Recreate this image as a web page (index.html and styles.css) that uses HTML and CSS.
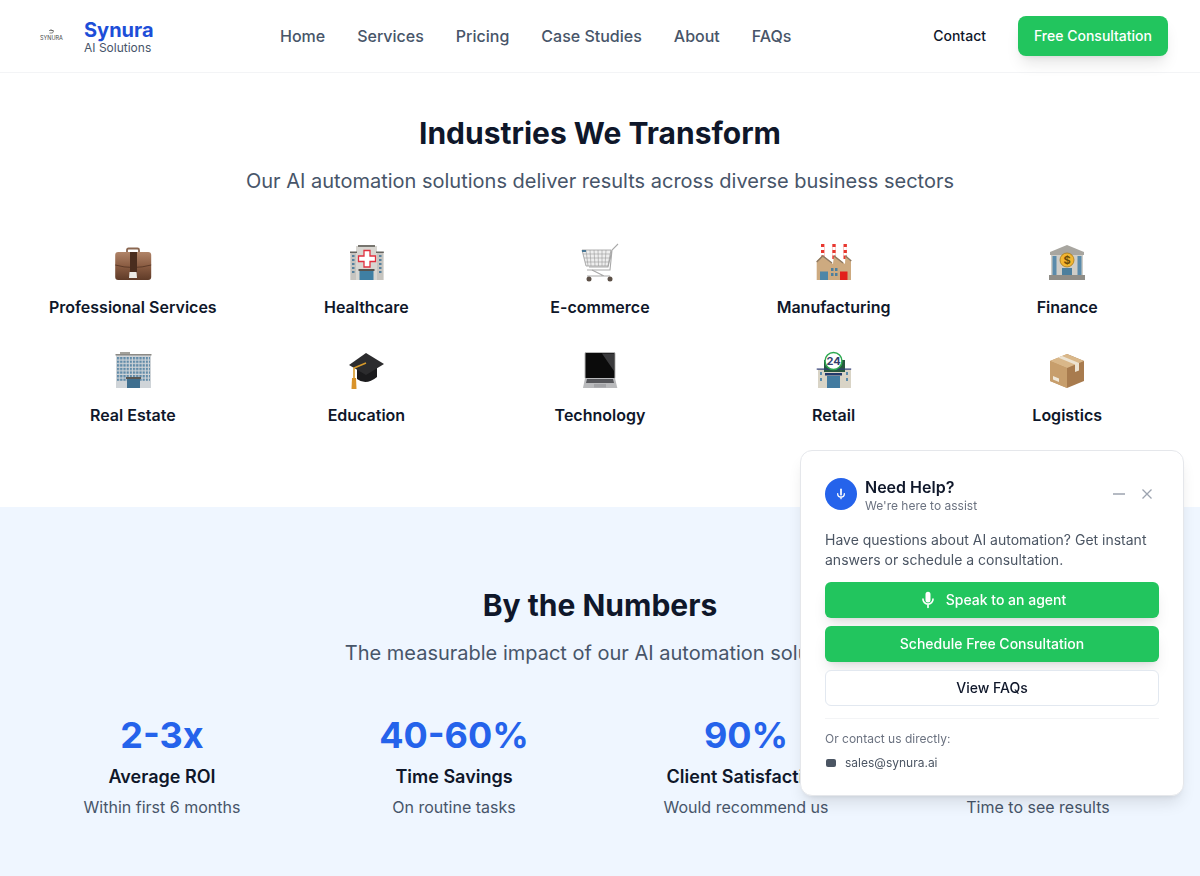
FILE: index.html
```html
<!DOCTYPE html>
<html lang="en">
<head>
	<meta charset="utf-8" />
	<title>Synura AI Solutions</title>
	<link rel="stylesheet" href="styles.css">
</head>
<body>
<header class="nav">
	<div class="brand">
		<svg class="brand-logo" viewBox="0 0 40 40" aria-hidden="true">
			<path d="M17 14.500h4.500M18.500 13.500l3 1.500-1 2h-3" stroke="#555" stroke-width=".7" fill="none"/>
			<text x="19.500" y="23.500" text-anchor="middle" class="brand-logo-text">SYNURA</text>
		</svg>
		<div>
			<div class="brand-name">Synura</div>
			<div class="brand-sub">AI Solutions</div>
		</div>
	</div>
	<nav class="nav-links">
		<a>Home</a>
		<a>Services</a>
		<a>Pricing</a>
		<a>Case Studies</a>
		<a>About</a>
		<a>FAQs</a>
	</nav>
	<div class="nav-actions">
		<a class="contact">Contact</a>
		<a class="btn-green nav-cta">Free Consultation</a>
	</div>
</header>

<section class="industries">
	<h2>Industries We Transform</h2>
	<p class="lead">Our AI automation solutions deliver results across diverse business sectors</p>
	<div class="industry-grid">
		<div class="industry">
			<svg class="industry-icon" viewBox="0 0 40 40" aria-hidden="true">
				<defs><linearGradient id="case" x1="0" y1="0" x2="0" y2="1"><stop offset="0" stop-color="#b08468"/><stop offset=".5" stop-color="#8a5c42"/><stop offset="1" stop-color="#5f3b28"/></linearGradient></defs>
				<path d="M14 10V7Q14 5.500 15.500 5.500H24.500Q26 5.500 26 7V10" fill="none" stroke="#8a6650" stroke-width="1.800"/>
				<rect x="2.200" y="9" width="36" height="28" rx="3" fill="url(#case)"/>
				<path d="M2.200 22Q20 27 38.200 22" fill="none" stroke="#4a2c1c" stroke-width=".7"/>
				<rect x="17" y="9" width="7" height="21" fill="#4a2d1e"/>
				<path d="M16.500 29H23.500L24 35H16Z" fill="#eceae6"/>
			</svg>
			<div class="industry-name">Professional Services</div>
		</div>
		<div class="industry">
			<svg class="industry-icon" viewBox="0 0 40 40" aria-hidden="true">
				<rect x="4.300" y="9" width="33.300" height="28" fill="#c6c4bf"/>
				<rect x="10" y="3" width="21" height="34" fill="#d8d6d1"/>
				<rect x="12" y="2" width="17" height="2" fill="#77756f"/>
				<rect x="4" y="8.500" width="7" height="1.500" fill="#66645f"/>
				<rect x="30" y="8.500" width="7.800" height="1.500" fill="#66645f"/>
				<path d="M18 7.500H24V13H29.500V18.500H24V24H18V18.500H12.500V13H18Z" fill="#fff" stroke="#e0303f" stroke-width="1.300"/>
				<g fill="#56819e"><rect x="6" y="12" width="2.500" height="2"/><rect x="6" y="16" width="2.500" height="2"/><rect x="6" y="20" width="2.500" height="2"/><rect x="6" y="24" width="2.500" height="2"/><rect x="6" y="28" width="2.500" height="2"/><rect x="33" y="12" width="2.500" height="2"/><rect x="33" y="16" width="2.500" height="2"/><rect x="33" y="20" width="2.500" height="2"/><rect x="33" y="24" width="2.500" height="2"/><rect x="33" y="28" width="2.500" height="2"/></g>
				<rect x="12.500" y="26" width="16" height="2" fill="#55534f"/>
				<rect x="13.500" y="28" width="14" height="9" fill="#3f7fa3"/>
			</svg>
			<div class="industry-name">Healthcare</div>
		</div>
		<div class="industry">
			<svg class="industry-icon" viewBox="0 0 40 40" aria-hidden="true">
				<path d="M38 1L32 7L28 24H9M32 7L30 27H7" fill="none" stroke="#a9a9a9" stroke-width="1.100"/>
				<path d="M2 7H31L28 23H6Z" fill="#eee" stroke="#999" stroke-width=".8"/>
				<path d="M6 7L8 23M10 7L11 23M14 7L15 23M18 7L18.500 23M22 7L22 23M26 7L25 23M3 11H30M4 15H29.500M5 19H29" stroke="#9a9a9a" stroke-width=".6" fill="none"/>
				<rect x="2" y="7" width="4" height="2" fill="#4a7896"/>
				<path d="M12 27L24 33M7 33H30" stroke="#a9a9a9" stroke-width="1.200"/>
				<circle cx="9" cy="36" r="2.500" fill="#5c5047"/>
				<circle cx="30" cy="36" r="2.500" fill="#5c5047"/>
			</svg>
			<div class="industry-name">E-commerce</div>
		</div>
		<div class="industry">
			<svg class="industry-icon" viewBox="0 0 40 40" aria-hidden="true">
				<g fill="#e8372f"><rect x="7" y="1" width="3.400" height="15"/><rect x="18.300" y="1" width="3.400" height="15"/><rect x="29.500" y="1" width="3.400" height="15"/></g>
				<g fill="#fff"><rect x="7" y="4" width="3.400" height="3"/><rect x="18.300" y="4" width="3.400" height="3"/><rect x="29.500" y="4" width="3.400" height="3"/><rect x="7" y="10" width="3.400" height="2.500"/><rect x="18.300" y="10" width="3.400" height="2.500"/><rect x="29.500" y="10" width="3.400" height="2.500"/></g>
				<path d="M2.700 18L8.700 12L19 21L20 12L31 21L31.500 12L37 18V37H2.700Z" fill="#cdaa80"/>
				<path d="M2.700 19L8.700 13L18 20M20 13L29 20M31.500 13L37.300 18" stroke="#8f7a63" stroke-width="1.400" fill="none"/>
				<rect x="6" y="28.500" width="8" height="8.500" fill="#4d86a8"/>
				<rect x="26" y="28.500" width="7.500" height="8.500" fill="#e2201c"/>
				<g fill="#4d7f9d"><rect x="17" y="25" width="2.500" height="3"/><rect x="21" y="25" width="2.500" height="3"/><rect x="17" y="30" width="2.500" height="3"/><rect x="21" y="30" width="2.500" height="3"/></g>
			</svg>
			<div class="industry-name">Manufacturing</div>
		</div>
		<div class="industry">
			<svg class="industry-icon" viewBox="0 0 40 40" aria-hidden="true">
				<path d="M20 2L37 9V12H3V9Z" fill="#a8a6a0"/>
				<rect x="4" y="12" width="32" height="20" fill="#cfcdc7"/>
				<g fill="#5b8bab"><rect x="5.500" y="13" width="4" height="19"/><rect x="30.500" y="13" width="4" height="19"/></g>
				<circle cx="20" cy="17" r="7" fill="#f2b632" stroke="#a87a18" stroke-width=".8"/>
				<text x="20" y="21" text-anchor="middle" class="dollar">$</text>
				<rect x="15" y="25" width="10" height="8" fill="#4d7f9d"/>
				<rect x="2" y="32" width="36" height="5" fill="#8f8d87"/>
			</svg>
			<div class="industry-name">Finance</div>
		</div>
		<div class="industry">
			<svg class="industry-icon" viewBox="0 0 40 40" aria-hidden="true">
				<defs><pattern id="win" width="3.200" height="3.600" patternUnits="userSpaceOnUse" x="4" y="6"><rect width="2.200" height="2.400" fill="#5f8aa8"/></pattern></defs>
				<rect x="3" y="3" width="35" height="34" fill="#cfd4d8"/>
				<rect x="7" y="1" width="10" height="2" fill="#a3a19b"/>
				<rect x="2.500" y="3" width="36" height="1.500" fill="#8c8a85"/>
				<rect x="4" y="6" width="33" height="24" fill="url(#win)"/>
				<rect x="13" y="26" width="15" height="2" fill="#5a5854"/>
				<rect x="14" y="28" width="13" height="9" fill="#3f6f8f"/>
			</svg>
			<div class="industry-name">Real Estate</div>
		</div>
		<div class="industry">
			<svg class="industry-icon" viewBox="0 0 40 40" aria-hidden="true">
				<path d="M11 18V28Q20 35 31 26V17Z" fill="#1b1b1d"/>
				<path d="M20 2L38 13L20 24L3 14Z" fill="#2c2c2e"/>
				<path d="M20 12L8 17V28" fill="none" stroke="#d79a2b" stroke-width="1.600"/>
				<path d="M6 27H10L10.500 38H5.500Z" fill="#d9932a"/>
			</svg>
			<div class="industry-name">Education</div>
		</div>
		<div class="industry">
			<svg class="industry-icon" viewBox="0 0 40 40" aria-hidden="true">
				<rect x="5" y="1.500" width="30" height="26" rx="1" fill="#0b0b0b" stroke="#b8b8b8"/>
				<path d="M22 2.500H34V20Z" fill="#3a3a3c"/>
				<path d="M5 27H35L37.300 37H3Z" fill="#b9babc"/>
				<path d="M7 28H33L34 32H6Z" fill="#55565a"/>
				<rect x="14" y="33" width="12" height="3.500" fill="#a3a4a7"/>
			</svg>
			<div class="industry-name">Technology</div>
		</div>
		<div class="industry">
			<svg class="industry-icon" viewBox="0 0 40 40" aria-hidden="true">
				<rect x="4" y="18" width="33" height="19" fill="#d9d4c6"/>
				<rect x="10" y="9" width="21" height="12" fill="#27583f"/>
				<rect x="2.700" y="17.500" width="34.500" height="1.200" fill="#333f78"/>
				<circle cx="19.500" cy="10" r="8.500" fill="#fff" stroke="#2da84f" stroke-width="1.500"/>
				<text x="19.500" y="14" text-anchor="middle" class="clock-num">24</text>
				<rect x="11" y="22" width="17" height="2.500" fill="#23396b"/>
				<rect x="13" y="25" width="13" height="12" fill="#437ba0"/>
				<g fill="#5b8bab"><rect x="6" y="21" width="2" height="3"/><rect x="6" y="27" width="2" height="3"/><rect x="32" y="21" width="2" height="3"/><rect x="32" y="27" width="2" height="3"/></g>
			</svg>
			<div class="industry-name">Retail</div>
		</div>
		<div class="industry">
			<svg class="industry-icon" viewBox="0 0 40 40" aria-hidden="true">
				<path d="M20 3L37 10V30L20 37Z" fill="#a87b4e"/>
				<path d="M20 3L3 10V30L20 37Z" fill="#c29866"/>
				<path d="M3 10L20 17L37 10L20 3Z" fill="#d9b789"/>
				<path d="M20 17V37L3 30V10Z" fill="#c79e6c"/>
				<path d="M11 6.500L28 13.500V21L32 19.500V12L15 5Z" fill="#ece3d2"/>
				<path d="M6 25L12 27.500V31L6 28.500Z" fill="#efe7d8"/>
			</svg>
			<div class="industry-name">Logistics</div>
		</div>
	</div>
</section>

<section class="numbers">
	<h2>By the Numbers</h2>
	<p class="lead">The measurable impact of our AI automation solutions</p>
	<div class="stat-grid">
		<div class="stat">
			<div class="stat-num">2-3x</div>
			<div class="stat-label">Average ROI</div>
			<div class="stat-note">Within first 6 months</div>
		</div>
		<div class="stat">
			<div class="stat-num">40-60%</div>
			<div class="stat-label">Time Savings</div>
			<div class="stat-note">On routine tasks</div>
		</div>
		<div class="stat">
			<div class="stat-num">90%</div>
			<div class="stat-label">Client Satisfaction</div>
			<div class="stat-note">Would recommend us</div>
		</div>
		<div class="stat">
			<div class="stat-num">30 Days</div>
			<div class="stat-label">Fast Implementation</div>
			<div class="stat-note">Time to see results</div>
		</div>
	</div>
</section>

<aside class="help">
	<div class="help-head">
		<span class="help-badge">
			<svg viewBox="0 0 24 24" width="16" height="16" fill="none" stroke="#fff" stroke-width="2" stroke-linecap="round" aria-hidden="true">
				<path d="M12 5v8" stroke-width="2.600"/>
				<path d="M7 11.500a5 5 0 0 0 10 0M12 16.500V19"/>
			</svg>
		</span>
		<div class="help-titles">
			<div class="help-title">Need Help?</div>
			<div class="help-sub">We're here to assist</div>
		</div>
		<div class="help-controls">
			<svg viewBox="0 0 16 16" width="16" height="16" stroke="#9ca3af" stroke-width="1.500" aria-hidden="true"><path d="M2 8h12"/></svg>
			<svg viewBox="0 0 16 16" width="16" height="16" stroke="#9ca3af" stroke-width="1.300" aria-hidden="true"><path d="M3.500 3.500l9 9M12.500 3.500l-9 9"/></svg>
		</div>
	</div>
	<p class="help-text">Have questions about AI automation? Get instant answers or schedule a consultation.</p>
	<div class="help-buttons">
		<a class="btn-green help-btn">
			<svg viewBox="0 0 24 24" width="20" height="20" fill="none" stroke="#fff" stroke-width="2" stroke-linecap="round" aria-hidden="true">
				<rect x="10" y="3" width="4" height="11" rx="2" fill="#fff"/>
				<path d="M6 11a6 6 0 0 0 12 0M12 17v4"/>
			</svg>
			Speak to an agent
		</a>
		<a class="btn-green help-btn">Schedule Free Consultation</a>
		<a class="help-btn btn-plain">View FAQs</a>
	</div>
	<div class="help-contact">
		<div class="help-contact-title">Or contact us directly:</div>
		<div class="help-email">
			<span class="mail-icon"></span>
			sales@synura.ai
		</div>
	</div>
</aside>
</body>
</html>
```

FILE: styles.css
```css
*{
	box-sizing: border-box;
}
html, body{
	margin: 0;
	height: 876px;
	overflow: hidden;
}
body{
	font-family: Inter, "Liberation Sans", sans-serif;
	color: #0f172a;
	background: #fff;
}
h2{
	margin: 0 0 16px;
	font-size: 30px;
	line-height: 36px;
	font-weight: 700;
	text-align: center;
}
.lead{
	margin: 0 0 48px;
	font-size: 20px;
	line-height: 28px;
	color: #475569;
	text-align: center;
}

/* nav */
.nav{
	display: flex;
	align-items: center;
	height: 73px;
	padding: 0 32px;
	border-bottom: 1px solid #f3f4f6;
}
.brand{
	display: flex;
	align-items: center;
	gap: 12px;
	width: 248px;
}
.brand-logo{
	width: 40px;
	height: 40px;
}
.brand-logo-text{
	font-size: 5.500px;
	fill: #444;
}
.brand-name{
	margin-top: 2px;
	font-size: 20px;
	line-height: 22px;
	font-weight: 700;
	color: #1d4ed8;
}
.brand-sub{
	font-size: 12px;
	line-height: 14px;
	color: #475569;
}
.nav-links{
	display: flex;
	gap: 32px;
	flex: 1;
	font-size: 16px;
	line-height: 24px;
	font-weight: 500;
	color: #475569;
}
.nav-actions{
	display: flex;
	align-items: center;
	gap: 32px;
}
.contact{
	font-size: 14px;
	line-height: 20px;
	font-weight: 500;
}
.btn-green{
	background: #22c55e;
	color: #fff;
	box-shadow: 0 10px 15px -3px rgba(0,0,0,.1), 0 4px 6px -4px rgba(0,0,0,.1);
}
.nav-cta{
	padding: 10px 16px;
	border-radius: 8px;
	font-size: 14px;
	line-height: 20px;
	font-weight: 500;
}

/* industries */
.industries{
	padding: 42px 32px 80px;
}
.industry-grid{
	display: grid;
	grid-template-columns: repeat(5, 1fr);
	gap: 32px;
}
.industry{
	display: flex;
	flex-direction: column;
	align-items: center;
	gap: 12px;
}
.industry-icon{
	width: 40px;
	height: 40px;
}
.industry-name{
	font-size: 16px;
	line-height: 24px;
	font-weight: 600;
}
.dollar{
	font-size: 11px;
	font-weight: 700;
	fill: #6b4a08;
}
.clock-num{
	font-size: 11px;
	font-weight: 700;
	fill: #33406b;
}

/* numbers */
.numbers{
	padding: 80px 32px;
	background: #eff6ff;
	height: 369px;
}
.stat-grid{
	display: grid;
	grid-template-columns: repeat(4, 1fr);
	gap: 32px;
	text-align: center;
}
.stat-num{
	font-size: 36px;
	line-height: 40px;
	font-weight: 700;
	color: #2563eb;
	margin-bottom: 8px;
}
.stat-label{
	font-size: 18px;
	line-height: 28px;
	font-weight: 600;
	margin-bottom: 4px;
}
.stat-note{
	font-size: 16px;
	line-height: 24px;
	color: #475569;
}

/* help widget */
.help{
	position: fixed;
	right: 16px;
	bottom: 80px;
	width: 384px;
	padding: 24px;
	background: #fff;
	border: 1px solid #e5e7eb;
	border-radius: 12px;
	box-shadow: 0 10px 15px -3px rgba(0,0,0,.1), 0 4px 6px -4px rgba(0,0,0,.1);
}
.help-head{
	display: flex;
	align-items: center;
	gap: 8px;
	margin-bottom: 17px;
}
.help-badge{
	display: flex;
	align-items: center;
	justify-content: center;
	width: 32px;
	height: 32px;
	border-radius: 50%;
	background: #2563eb;
}
.help-titles{
	flex: 1;
}
.help-title{
	font-size: 16px;
	line-height: 24px;
	font-weight: 600;
}
.help-sub{
	font-size: 12px;
	line-height: 14px;
	color: #6b7280;
}
.help-controls{
	display: flex;
	gap: 12px;
	margin-right: 4px;
}
.help-text{
	margin: 0 0 12px;
	font-size: 14px;
	line-height: 20px;
	color: #4b5563;
}
.help-buttons{
	display: flex;
	flex-direction: column;
	gap: 8px;
}
.help-btn{
	display: flex;
	align-items: center;
	justify-content: center;
	gap: 8px;
	height: 36px;
	border-radius: 6px;
	font-size: 14px;
	line-height: 20px;
	font-weight: 500;
}
.btn-plain{
	background: #fff;
	border: 1px solid #e2e8f0;
	color: #0f172a;
}
.help-contact{
	margin-top: 12px;
	padding-top: 12px;
	border-top: 1px solid #f3f4f6;
	font-size: 12px;
	line-height: 16px;
	color: #6b7280;
}
.help-email{
	display: flex;
	align-items: center;
	gap: 9px;
	margin-top: 8px;
	color: #4b5563;
}
.mail-icon{
	width: 10px;
	height: 8px;
	margin-left: 1px;
	border-radius: 2px;
	background: #4b5563;
}
```
